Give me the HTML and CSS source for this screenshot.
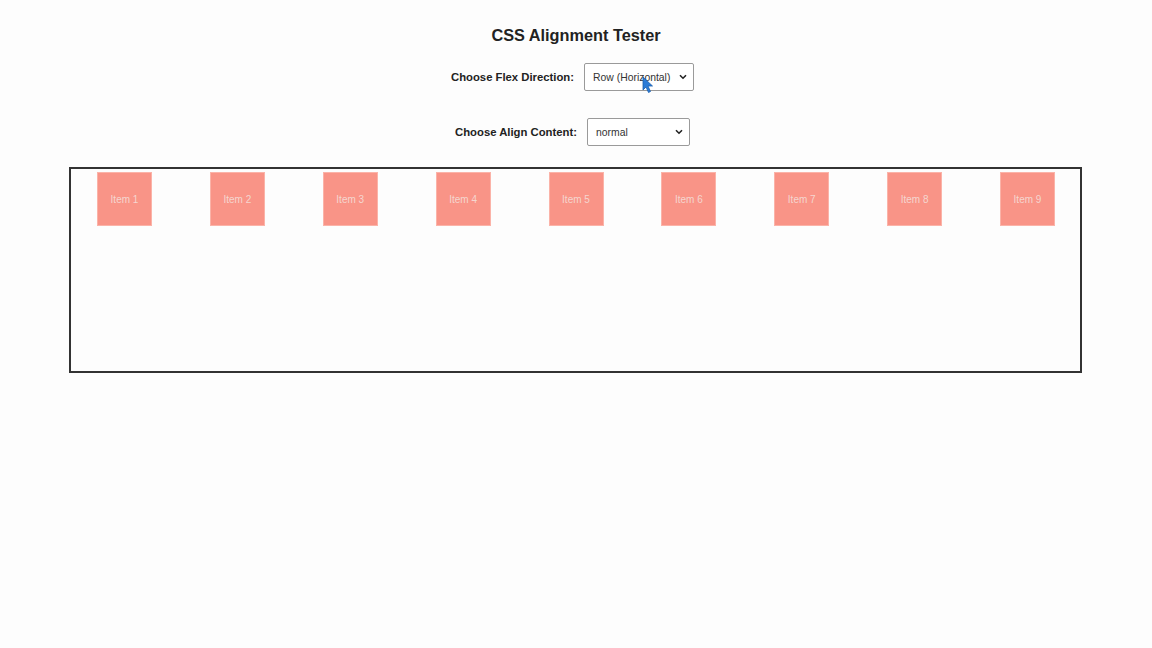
FILE: index.html
```html
<!DOCTYPE html>
<html>
<head>
<meta charset="utf-8">
<title>CSS Alignment Tester</title>
<link rel="stylesheet" href="styles.css">
</head>
<body>
<h1 class="title">CSS Alignment Tester</h1>
<div class="control">
  <label class="label" for="dir">Choose Flex Direction:</label>
  <div class="select-wrap">
    <select id="dir" class="select select-dir">
      <option>Row (Horizontal)</option>
      <option>Column (Vertical)</option>
    </select>
    <svg class="chevron" width="8" height="6" viewBox="0 0 8 6"><path d="M1 1.2 L4 4.2 L7 1.2" fill="none" stroke="#222" stroke-width="1.6"/></svg>
    <svg class="cursor" width="12" height="18" viewBox="0 0 12 18"><path d="M1 1 L1 14 L4 11 L6.5 16.5 L8.5 15.5 L6 10 L10.5 10 Z" fill="#2b7bd6" stroke="#1a5fae" stroke-width="0.8"/></svg>
  </div>
</div>
<div class="control control-2">
  <label class="label" for="ac">Choose Align Content:</label>
  <div class="select-wrap">
    <select id="ac" class="select select-ac">
      <option>normal</option>
      <option>flex-start</option>
      <option>center</option>
    </select>
    <svg class="chevron" width="8" height="6" viewBox="0 0 8 6"><path d="M1 1.2 L4 4.2 L7 1.2" fill="none" stroke="#222" stroke-width="1.6"/></svg>
  </div>
</div>
<div class="container">
  <div class="item">Item 1</div>
  <div class="item">Item 2</div>
  <div class="item">Item 3</div>
  <div class="item">Item 4</div>
  <div class="item">Item 5</div>
  <div class="item">Item 6</div>
  <div class="item">Item 7</div>
  <div class="item">Item 8</div>
  <div class="item">Item 9</div>
</div>
</body>
</html>
```
FILE: styles.css
```css
html, body {
  margin: 0;
  padding: 0;
  background: #fdfdfd;
}
body {
  font-family: "Liberation Sans", Arial, sans-serif;
  color: #222;
  padding-top: 24px;
}
.title {
  margin: 0;
  text-align: center;
  font-size: 16.3px;
  font-weight: bold;
  line-height: 22px;
  color: #222;
}
.control {
  display: flex;
  justify-content: center;
  align-items: center;
  gap: 10px;
  margin-top: 17px;
  height: 28px;
  padding-right: 7px;
}
.control-2 {
  margin-top: 27px;
}
.label {
  font-size: 11.3px;
  font-weight: bold;
  color: #222;
}
.select-wrap {
  position: relative;
  display: flex;
}
.select {
  -webkit-appearance: none;
  appearance: none;
  height: 28px;
  font-family: "Liberation Sans", Arial, sans-serif;
  font-size: 10.4px;
  color: #333;
  background: #fff;
  border: 1px solid #9a9a9a;
  border-radius: 2px;
  padding: 0 18px 0 8px;
  outline: none;
}
.select-dir {
  width: 110px;
}
.select-ac {
  width: 103px;
}
.chevron {
  position: absolute;
  right: 7px;
  top: 11px;
  pointer-events: none;
}
.cursor {
  position: absolute;
  left: 58px;
  top: 13px;
  pointer-events: none;
}
.container {
  box-sizing: border-box;
  width: 1013px;
  height: 206px;
  margin: 21px 0 0 69px;
  border: 2px solid #333;
  display: flex;
  justify-content: space-between;
  align-items: flex-start;
  padding: 3px 25px 0 26px;
}
.item {
  box-sizing: border-box;
  width: 55px;
  height: 54px;
  background: #f99487;
  border: 1px solid #fbb3a8;
  color: #f5d6cf;
  font-size: 10px;
  display: flex;
  align-items: center;
  justify-content: center;
}
```
